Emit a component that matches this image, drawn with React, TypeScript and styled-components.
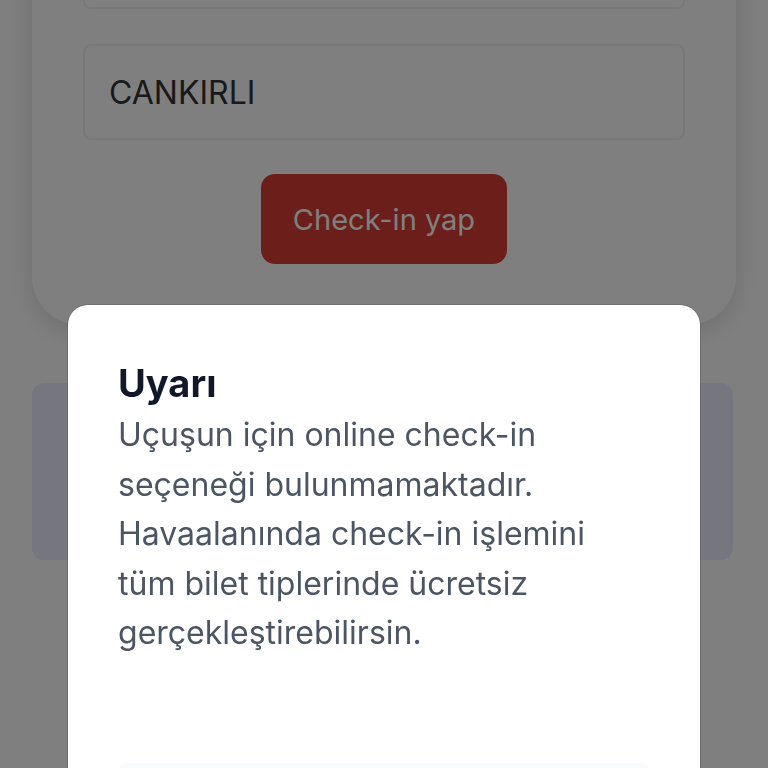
import React from 'react'
import styled, { createGlobalStyle } from 'styled-components'

const GlobalStyle = createGlobalStyle`
    html, body {
        margin: 0;
        padding: 0;
        background: #ffffff;
        font-family: Inter, "Noto Sans", "Liberation Sans", sans-serif;
        overflow: hidden;
    }
`

function App() {
    return (
        <React.Fragment>
            <GlobalStyle />
            <Page>
                <FormCard>
                    <Field />
                    <Field>
                        <FieldText>CANKIRLI</FieldText>
                    </Field>
                    <SubmitButton>Check-in yap</SubmitButton>
                </FormCard>
                <InfoCard />
            </Page>
            <Overlay>
                <Sheet>
                    <SheetTitle>Uyarı</SheetTitle>
                    <SheetText>
                        Uçuşun için online check-in seçeneği bulunmamaktadır.
                        Havaalanında check-in işlemini tüm bilet tiplerinde ücretsiz
                        gerçekleştirebilirsin.
                    </SheetText>
                    <SheetAction />
                </Sheet>
            </Overlay>
        </React.Fragment>
    )
}

export default App

const Page = styled.main`
    display: flex;
    flex-direction: column;
    gap: 58px;
    padding: 0 32px;
    height: 768px;
`

// top of the card (first field) scrolls above the viewport
const FormCard = styled.section`
    margin-top: -130px;
    padding: 43px 51px 61px;
    background: #ffffff;
    border-radius: 0 0 48px 48px;
    box-shadow: 0 6px 24px rgba(0, 0, 0, 0.14);
    display: flex;
    flex-direction: column;
    align-items: center;
    gap: 35px;
`

const Field = styled.div`
    box-sizing: border-box;
    width: 100%;
    height: 96px;
    padding: 0 24px;
    border: 2px solid #eeeef0;
    border-radius: 8px;
    display: flex;
    align-items: center;
`

const FieldText = styled.span`
    font-size: 32px;
    color: #333333;
`

const SubmitButton = styled.button`
    width: 246px;
    height: 90px;
    margin-top: -1px;
    border: none;
    border-radius: 14px;
    background: #d73d34;
    color: #ffffff;
    font-family: inherit;
    font-size: 29px;
`

const InfoCard = styled.div`
    height: 177px;
    margin-right: 3px;
    border-radius: 12px;
    background: #ececfe;
`

const Overlay = styled.div`
    position: fixed;
    inset: 0;
    background: rgba(0, 0, 0, 0.5);
`

const Sheet = styled.div`
    position: absolute;
    top: 305px;
    left: 68px;
    width: 632px;
    bottom: -40px;
    box-sizing: border-box;
    padding: 56px 50px 0;
    background: #ffffff;
    border-radius: 20px 20px 0 0;
    box-shadow: 0 0 0 1px rgba(0, 0, 0, 0.12);
`

const SheetTitle = styled.h2`
    margin: 0;
    font-size: 38px;
    line-height: 44px;
    font-weight: 700;
    color: #111827;
`

const SheetText = styled.p`
    margin: 5px 0 0;
    width: 500px;
    font-size: 32px;
    line-height: 49.5px;
    color: #4b5563;
`

const SheetAction = styled.div`
    margin-top: 105px;
    height: 60px;
    border-radius: 10px;
    background: #f9fafb;
`
